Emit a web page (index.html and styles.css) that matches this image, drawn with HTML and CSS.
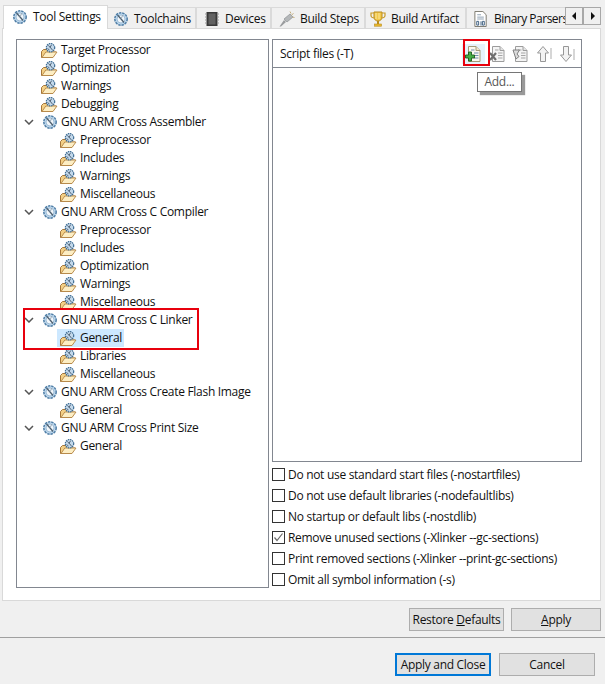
FILE: index.html
```html
<!DOCTYPE html>
<html lang="en">
<head>
<meta charset="utf-8">
<title>Tool Settings</title>
<link rel="stylesheet" href="styles.css">
</head>
<body>
<svg class="defs" width="0" height="0" aria-hidden="true">
  <symbol id="gear" viewBox="0 0 16 16">
    <circle cx="8" cy="8" r="6.200" fill="#bcd6ec" stroke="#4f7ea6" stroke-width="1.500" stroke-dasharray="2.400 .9"/>
    <circle cx="8" cy="8" r="4" fill="#f2f7fb" stroke="#8fb2cf" stroke-width=".8"/>
    <path d="M4.500 4 8.500 8.500l2.500 3" fill="none" stroke="#4c5f70" stroke-width="1.300"/>
    <path d="M9.800 4 8 8" fill="none" stroke="#98a8b6" stroke-width="1"/>
  </symbol>
  <symbol id="folder" viewBox="0 0 17 15">
    <path d="M.5 14.500V8.500l2-2h9v2.500h3.500l-3.500 5.500z" fill="#f3cf85" stroke="#a5763a"/>
    <path d="M1 14.500 4.800 9H16l-4 5.500z" fill="#fdeec4" stroke="#b48645" stroke-width=".9"/>
    <circle cx="9.500" cy="4.700" r="4.200" fill="#c3d9ec" stroke="#3f6d94" stroke-width="1.200" stroke-dasharray="1.500 .7"/>
    <path d="M7.200 2.300 9.800 5l2 2.500M10.500 1.800 9 4.500M6.500 5.500 8.500 7" fill="none" stroke="#46586a" stroke-width=".9"/>
  </symbol>
  <symbol id="chip" viewBox="0 0 16 16">
    <rect x="2.500" y="1" width="11" height="14" fill="#3a3a3a"/>
    <rect x="4.500" y="2.500" width="7" height="11" fill="#626262"/>
    <path d="M1 3h2M1 6h2M1 9h2M1 12h2M13 3h2M13 6h2M13 9h2M13 12h2" stroke="#9a9a9a" stroke-width="1.200"/>
  </symbol>
  <symbol id="steps" viewBox="0 0 16 16">
    <path d="M.5 15.500 5 9l2 2-5 4.500z" fill="#9a9c9e"/>
    <path d="M5 8l6-5 3 3-6 5z" fill="#b4b7b9" stroke="#8d9093" stroke-width=".7"/>
    <path d="M11 .5l1 2M14.500 2.500l-2 1.500M15.500 6.500l-2-.5" stroke="#c3ad7c" stroke-width="1"/>
  </symbol>
  <symbol id="trophy" viewBox="0 0 16 16">
    <path d="M4 1h8v5c0 2.500-1.800 4-4 4S4 8.500 4 6z" fill="#f2c84b" stroke="#b88a1c"/>
    <path d="M6 2v6M9 2v6" stroke="#fbe79c"/>
    <path d="M4 2H1v2.500C1 6 2.500 7 4.500 7M12 2h3v2.500C15 6 13.500 7 11.500 7" fill="none" stroke="#c89a26" stroke-width="1.200"/>
    <path d="M8 10v3" stroke="#b88a1c" stroke-width="2"/>
    <rect x="4.500" y="13" width="7" height="2.200" fill="#eab92f" stroke="#b88a1c" stroke-width=".6"/>
  </symbol>
  <symbol id="binary" viewBox="0 0 16 17">
    <path d="M1.500 .5H10l3.500 3.500v12.500H1.500z" fill="#fff" stroke="#77746a"/>
    <path d="M4 4h4M4 6.500h7M4 8.500h7" stroke="#8a9db0"/>
    <path d="M3.500 11h2v4h-2zM9.500 11h2v4h-2z" fill="none" stroke="#3a5c7e"/>
    <path d="M8 11v4.500" stroke="#3a5c7e"/>
  </symbol>
  <symbol id="doc" viewBox="0 0 16 16">
    <path d="M3.500 .5H11L15 4.500V15.500H3.500z" fill="#fbf8ee" stroke="#a49a78"/>
    <path d="M11 .5V4.500H15" fill="#efe7cc" stroke="#a49a78"/>
    <path d="M6 4h3.500M9 7h4.500M9 9.500h4.500M9 12h4.500" stroke="#6f8fb0"/>
  </symbol>
  <symbol id="gdoc" viewBox="0 0 16 16">
    <path d="M3.500 .5H11L15 4.500V15.500H3.500z" fill="#f4f4f4" stroke="#9c9c9c"/>
    <path d="M11 .5V4.500H15" fill="#e4e4e4" stroke="#9c9c9c"/>
    <path d="M6 4h3.500M9 7h4.500M9 9.500h4.500M9 12h4.500" stroke="#a6a6a6"/>
  </symbol>
</svg>

<main class="dialog">
  <div class="tabbar">
    <div class="tab tab-active w-settings"><svg class="ticon"><use href="#gear"/></svg>Tool Settings</div>
    <div class="tab w-chains"><svg class="ticon"><use href="#gear"/></svg>Toolchains</div>
    <div class="tab w-devices"><svg class="ticon"><use href="#chip"/></svg>Devices</div>
    <div class="tab w-steps"><svg class="ticon"><use href="#steps"/></svg>Build Steps</div>
    <div class="tab w-artifact"><svg class="ticon"><use href="#trophy"/></svg>Build Artifact</div>
    <div class="tab w-binary"><svg class="ticon"><use href="#binary"/></svg>Binary Parsers</div>
    <div class="scrollers">
      <button class="scroller"><svg width="5" height="8"><path d="M4 0v8L0 4z" fill="#111"/></svg></button>
      <button class="scroller"><svg width="5" height="8"><path d="M1 0v8l4-4z" fill="#111"/></svg></button>
    </div>
  </div>

  <section class="panel">
    <div class="tree">
      <div class="row l0"><svg class="ficon"><use href="#folder"/></svg><span class="label">Target Processor</span></div>
      <div class="row l0"><svg class="ficon"><use href="#folder"/></svg><span class="label">Optimization</span></div>
      <div class="row l0"><svg class="ficon"><use href="#folder"/></svg><span class="label">Warnings</span></div>
      <div class="row l0"><svg class="ficon"><use href="#folder"/></svg><span class="label">Debugging</span></div>
      <div class="row tool"><svg class="chev"><path d="M1 1l4 4 4-4"/></svg><svg class="gicon"><use href="#gear"/></svg><span class="label">GNU ARM Cross Assembler</span></div>
      <div class="row l1"><svg class="ficon"><use href="#folder"/></svg><span class="label">Preprocessor</span></div>
      <div class="row l1"><svg class="ficon"><use href="#folder"/></svg><span class="label">Includes</span></div>
      <div class="row l1"><svg class="ficon"><use href="#folder"/></svg><span class="label">Warnings</span></div>
      <div class="row l1"><svg class="ficon"><use href="#folder"/></svg><span class="label">Miscellaneous</span></div>
      <div class="row tool"><svg class="chev"><path d="M1 1l4 4 4-4"/></svg><svg class="gicon"><use href="#gear"/></svg><span class="label">GNU ARM Cross C Compiler</span></div>
      <div class="row l1"><svg class="ficon"><use href="#folder"/></svg><span class="label">Preprocessor</span></div>
      <div class="row l1"><svg class="ficon"><use href="#folder"/></svg><span class="label">Includes</span></div>
      <div class="row l1"><svg class="ficon"><use href="#folder"/></svg><span class="label">Optimization</span></div>
      <div class="row l1"><svg class="ficon"><use href="#folder"/></svg><span class="label">Warnings</span></div>
      <div class="row l1"><svg class="ficon"><use href="#folder"/></svg><span class="label">Miscellaneous</span></div>
      <div class="row tool"><svg class="chev"><path d="M1 1l4 4 4-4"/></svg><svg class="gicon"><use href="#gear"/></svg><span class="label">GNU ARM Cross C Linker</span></div>
      <div class="row l1"><div class="selected"><svg class="ficon"><use href="#folder"/></svg><span class="label">General</span></div></div>
      <div class="row l1"><svg class="ficon"><use href="#folder"/></svg><span class="label">Libraries</span></div>
      <div class="row l1"><svg class="ficon"><use href="#folder"/></svg><span class="label">Miscellaneous</span></div>
      <div class="row tool"><svg class="chev"><path d="M1 1l4 4 4-4"/></svg><svg class="gicon"><use href="#gear"/></svg><span class="label">GNU ARM Cross Create Flash Image</span></div>
      <div class="row l1"><svg class="ficon"><use href="#folder"/></svg><span class="label">General</span></div>
      <div class="row tool"><svg class="chev"><path d="M1 1l4 4 4-4"/></svg><svg class="gicon"><use href="#gear"/></svg><span class="label">GNU ARM Cross Print Size</span></div>
      <div class="row l1"><svg class="ficon"><use href="#folder"/></svg><span class="label">General</span></div>
      <div class="mark mark-tree"></div>
    </div>

    <div class="options">
      <div class="listbox">
        <div class="listhead">
          <span class="listtitle">Script files (-T)</span>
          <div class="tools">
            <span class="tool-btn tool-hot"><svg class="tbicon"><use href="#doc"/><path d="M.5 9h3V6h3v3h3v3h-3v3h-3v-3h-3z" fill="#46ad46" stroke="#1c5c1c" stroke-width=".9"/></svg></span>
            <span class="tool-btn"><svg class="tbicon"><use href="#gdoc"/><path d="M1 7l6 7M7 7l-6 7" stroke="#6e6e6e" stroke-width="2.200"/></svg></span>
            <span class="tool-btn"><svg class="tbicon"><use href="#gdoc"/><path d="M1 4h6.500L5 8l2 2.500L4 13z" fill="#dcdcdc" stroke="#808080"/></svg></span>
            <span class="tool-btn"><svg class="tbicon"><path d="M7 .5l5.500 6.500H9.500v8.500h-5V7H1.500z" fill="#f3f3f3" stroke="#979797"/><path d="M15 2v11" stroke="#c8c8c8" stroke-width="1.500"/></svg></span>
            <span class="tool-btn"><svg class="tbicon"><path d="M7 15.500l5.500-6.500H9.500V.5h-5V9H1.500z" fill="#f3f3f3" stroke="#979797"/><path d="M15 3v11" stroke="#c8c8c8" stroke-width="1.500"/></svg></span>
          </div>
          <div class="mark mark-add"></div>
          <div class="tooltip">Add...</div>
        </div>
        <div class="listbody"></div>
      </div>
      <div class="checks">
        <label class="check"><span class="box"></span>Do not use standard start files (-nostartfiles)</label>
        <label class="check"><span class="box"></span>Do not use default libraries (-nodefaultlibs)</label>
        <label class="check"><span class="box"></span>No startup or default libs (-nostdlib)</label>
        <label class="check"><span class="box"><svg width="11" height="11"><path d="M1.500 5.500 4 8.500 9.500 1.500" fill="none" stroke="#6a6a6a" stroke-width="1.200"/></svg></span>Remove unused sections (-Xlinker --gc-sections)</label>
        <label class="check"><span class="box"></span>Print removed sections (-Xlinker --print-gc-sections)</label>
        <label class="check"><span class="box"></span>Omit all symbol information (-s)</label>
      </div>
    </div>
  </section>

  <div class="actions">
    <button class="btn btn-restore">Restore <u>D</u>efaults</button>
    <button class="btn btn-apply"><u>A</u>pply</button>
  </div>
  <div class="footer">
    <button class="btn btn-close">Apply and Close</button>
    <button class="btn btn-cancel">Cancel</button>
  </div>
</main>
</body>
</html>
```

FILE: styles.css
```css
* { box-sizing: border-box; }
html, body { margin: 0; padding: 0; }
body {
  width: 605px;
  height: 684px;
  overflow: hidden;
  background: #f0f0f0;
  color: #111;
  font-family: "Open Sans", "Liberation Sans", sans-serif;
  font-size: 12px;
  letter-spacing: -0.3px;
  line-height: 18px;
}
.defs { display: block; width: 0; height: 0; }
.dialog { display: flex; flex-direction: column; height: 684px; }

.tabbar { display: flex; align-items: flex-end; height: 28px; padding-left: 3px; position: relative; }
.tab {
  height: 21px;
  flex: 0 0 auto;
  display: flex;
  align-items: center;
  white-space: nowrap;
  overflow: hidden;
  padding: 1px 0 0 6px;
  border-top: 1px solid #dadada;
  border-right: 2px solid #dadada;
  background: #f0f0f0;
}
.tab-active {
  height: 24px;
  margin-bottom: -1px;
  padding: 0 0 2px 8px;
  background: #fff;
  border: 1px solid #d9d9d9;
  border-bottom: 0;
  position: relative;
  z-index: 1;
}
.ticon { width: 16px; height: 16px; margin-right: 5px; flex: none; }
.w-settings { width: 105px; }
.w-chains { width: 89px; padding-left: 5px; }
.w-devices { width: 75px; padding-left: 7px; }
.w-steps { width: 94px; padding-left: 7px; }
.w-artifact { width: 101px; padding-left: 4px; }
.w-binary { width: 98px; border-right: 0; letter-spacing: -0.5px; }
.scrollers { position: absolute; left: 565px; top: 7px; display: flex; }
.scroller {
  width: 18px;
  height: 18px;
  padding: 0;
  display: flex;
  align-items: center;
  justify-content: center;
  background: #f0f0f0;
  border: 1px solid #a8a8a8;
}

.panel {
  margin: 0 4px 0 2px;
  height: 573px;
  background: #fff;
  border: 1px solid #d9d9d9;
  padding: 10px 0 0 13px;
  display: flex;
  gap: 3px;
}
.tree {
  width: 253px;
  height: 549px;
  border: 1px solid #828790;
  padding-top: 1px;
  position: relative;
  background: #fff;
}
.row { height: 18px; display: flex; align-items: center; white-space: nowrap; }
.l0 { padding-left: 24px; }
.l1 { padding-left: 43px; }
.tool { padding-left: 7px; }
.selected { display: flex; align-items: center; background: #cde8ff; height: 18px; width: 67px; margin-left: -3px; padding-left: 3px; }
.ficon { width: 17px; height: 15px; flex: none; margin-right: 3px; }
.gicon { width: 16px; height: 16px; flex: none; margin-right: 3px; margin-left: 8px; }
.chev { width: 10px; height: 6px; flex: none; }
.chev path { fill: none; stroke: #555; stroke-width: 1.5; }
.label { display: block; }

.mark { position: absolute; border: 2px solid #e8000d; pointer-events: none; }
.mark-tree { left: 6px; top: 268px; width: 176px; height: 42px; }
.mark-add { left: 190px; top: -1px; width: 27px; height: 27px; }

.options { width: 310px; display: flex; flex-direction: column; }
.listbox { height: 423px; border: 1px solid #828790; display: flex; flex-direction: column; position: relative; }
.listhead { height: 28px; border-bottom: 1px solid #828790; display: flex; align-items: center; padding-left: 7px; position: relative; flex: none; }
.listtitle { flex: 1; }
.tools { display: flex; margin-right: 2px; }
.tool-btn { width: 23.500px; height: 20px; display: flex; justify-content: center; align-items: center; }
.tool-hot { background: #e6f2fb; }
.tbicon { width: 16px; height: 16px; }
.tooltip {
  position: absolute;
  left: 204px;
  top: 32px;
  width: 45px;
  height: 20px;
  background: #fff;
  border: 1px solid #767676;
  color: #575757;
  font-size: 12px;
  line-height: 18px;
  text-align: center;
  box-shadow: 3px 3px 1px rgba(0,0,0,.4);
  z-index: 2;
}
.listbody { flex: 1; background: #fff; }

.checks { display: flex; flex-direction: column; padding-top: 2px; }
.check { height: 21px; display: flex; align-items: center; white-space: nowrap; }
.box {
  width: 13px;
  height: 13px;
  margin-right: 3px;
  border: 1px solid #333;
  background: #fff;
  display: flex;
  align-items: center;
  justify-content: center;
  flex: none;
}
.box svg { display: block; }

.actions { display: flex; justify-content: flex-end; gap: 7px; padding: 7px 4px 0 0; border-bottom: 1px solid #a0a0a0; flex: none; height: 37px; }
.footer { display: flex; justify-content: flex-end; gap: 8px; padding: 15px 10px 0 0; }
.btn {
  height: 23px;
  padding: 0;
  font: inherit;
  letter-spacing: inherit;
  color: #111;
  background: #e1e1e1;
  border: 1px solid #adadad;
}
.btn-restore { width: 95px; }
.btn-apply { width: 90px; }
.btn-close { width: 96px; border: 2px solid #0078d7; }
.btn-cancel { width: 96px; }
```
